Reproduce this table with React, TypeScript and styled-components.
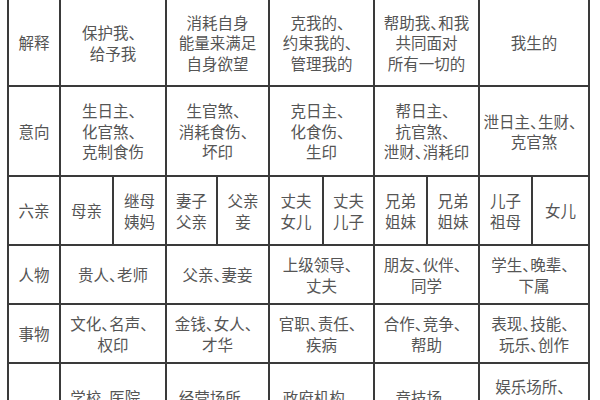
import React from "react";
import styled, { createGlobalStyle } from "styled-components";

const Global = createGlobalStyle`
  html, body { margin: 0; padding: 0; background: #ffffff; }
  body { overflow: hidden; }
`;

const Page = styled.div`
  width: 600px;
  height: 400px;
  overflow: hidden;
  padding-left: 7px;
  box-sizing: border-box;
  background: #ffffff;
`;

const Table = styled.div`
  margin-top: -2px;
  width: 583px;
  box-sizing: border-box;
  display: grid;
  grid-template-columns: 50px 51px 51px 49px 50px 52px 49px 51px 50px 51px 55px;
  grid-template-rows: 85px 88px 67px 57px 57px 86px;
  gap: 2px;
  padding: 2px;
  background: #3a3a3a;
  font-family: "Noto Sans CJK SC", "Noto Sans", sans-serif;
  font-size: 15.5px;
  line-height: 20.5px;
  color: #555555;
`;

const Cell = styled.div<{ $span?: number }>`
  grid-column: span ${(p) => p.$span ?? 1};
  background: #ffffff;
  display: flex;
  align-items: center;
  justify-content: center;
  text-align: center;
  white-space: nowrap;
`;

const Label = styled(Cell)``;

const Punct = styled.span`
  font-feature-settings: "halt";
`;

type Row = { label: string; cells: { span: number; lines: string[] }[] };

const rows: Row[] = [
  {
    label: "解释",
    cells: [
      { span: 2, lines: ["保护我、", "给予我"] },
      { span: 2, lines: ["消耗自身", "能量来满足", "自身欲望"] },
      { span: 2, lines: ["克我的、", "约束我的、", "管理我的"] },
      { span: 2, lines: ["帮助我、和我", "共同面对", "所有一切的"] },
      { span: 2, lines: ["我生的"] },
    ],
  },
  {
    label: "意向",
    cells: [
      { span: 2, lines: ["生日主、", "化官煞、", "克制食伤"] },
      { span: 2, lines: ["生官煞、", "消耗食伤、", "坏印"] },
      { span: 2, lines: ["克日主、", "化食伤、", "生印"] },
      { span: 2, lines: ["帮日主、", "抗官煞、", "泄财、消耗印"] },
      { span: 2, lines: ["泄日主、生财、", "克官煞"] },
    ],
  },
  {
    label: "六亲",
    cells: [
      { span: 1, lines: ["母亲"] },
      { span: 1, lines: ["继母", "姨妈"] },
      { span: 1, lines: ["妻子", "父亲"] },
      { span: 1, lines: ["父亲", "妾"] },
      { span: 1, lines: ["丈夫", "女儿"] },
      { span: 1, lines: ["丈夫", "儿子"] },
      { span: 1, lines: ["兄弟", "姐妹"] },
      { span: 1, lines: ["兄弟", "姐妹"] },
      { span: 1, lines: ["儿子", "祖母"] },
      { span: 1, lines: ["女儿"] },
    ],
  },
  {
    label: "人物",
    cells: [
      { span: 2, lines: ["贵人、老师"] },
      { span: 2, lines: ["父亲、妻妾"] },
      { span: 2, lines: ["上级领导、", "丈夫"] },
      { span: 2, lines: ["朋友、伙伴、", "同学"] },
      { span: 2, lines: ["学生、晚辈、", "下属"] },
    ],
  },
  {
    label: "事物",
    cells: [
      { span: 2, lines: ["文化、名声、", "权印"] },
      { span: 2, lines: ["金钱、女人、", "才华"] },
      { span: 2, lines: ["官职、责任、", "疾病"] },
      { span: 2, lines: ["合作、竞争、", "帮助"] },
      { span: 2, lines: ["表现、技能、", "玩乐、创作"] },
    ],
  },
  {
    label: "场所",
    cells: [
      { span: 2, lines: ["学校、医院、", "文化场所"] },
      { span: 2, lines: ["经营场所、", "银行"] },
      { span: 2, lines: ["政府机构、", "法院"] },
      { span: 2, lines: ["竞技场、", "体育场"] },
      { span: 2, lines: ["娱乐场所、", "艺术场所、", "学校"] },
    ],
  },
];

const renderLine = (line: string) => {
  const parts = line.split("、");
  return parts.map((p, i) => (
    <React.Fragment key={i}>
      {p}
      {i < parts.length - 1 &&
        (i < parts.length - 2 || parts[parts.length - 1] !== "" ? (
          <Punct>、</Punct>
        ) : (
          "、"
        ))}
    </React.Fragment>
  ));
};

const Lines = ({ lines }: { lines: string[] }) => (
  <div>
    {lines.map((l, i) => (
      <React.Fragment key={i}>
        {i > 0 && <br />}
        {renderLine(l)}
      </React.Fragment>
    ))}
  </div>
);

export default function App() {
  return (
    <>
      <Global />
      <Page>
        <Table>
          {rows.map((r) => (
            <React.Fragment key={r.label}>
              <Label>{r.label}</Label>
              {r.cells.map((c, i) => (
                <Cell key={i} $span={c.span}>
                  <Lines lines={c.lines} />
                </Cell>
              ))}
            </React.Fragment>
          ))}
        </Table>
      </Page>
    </>
  );
}
